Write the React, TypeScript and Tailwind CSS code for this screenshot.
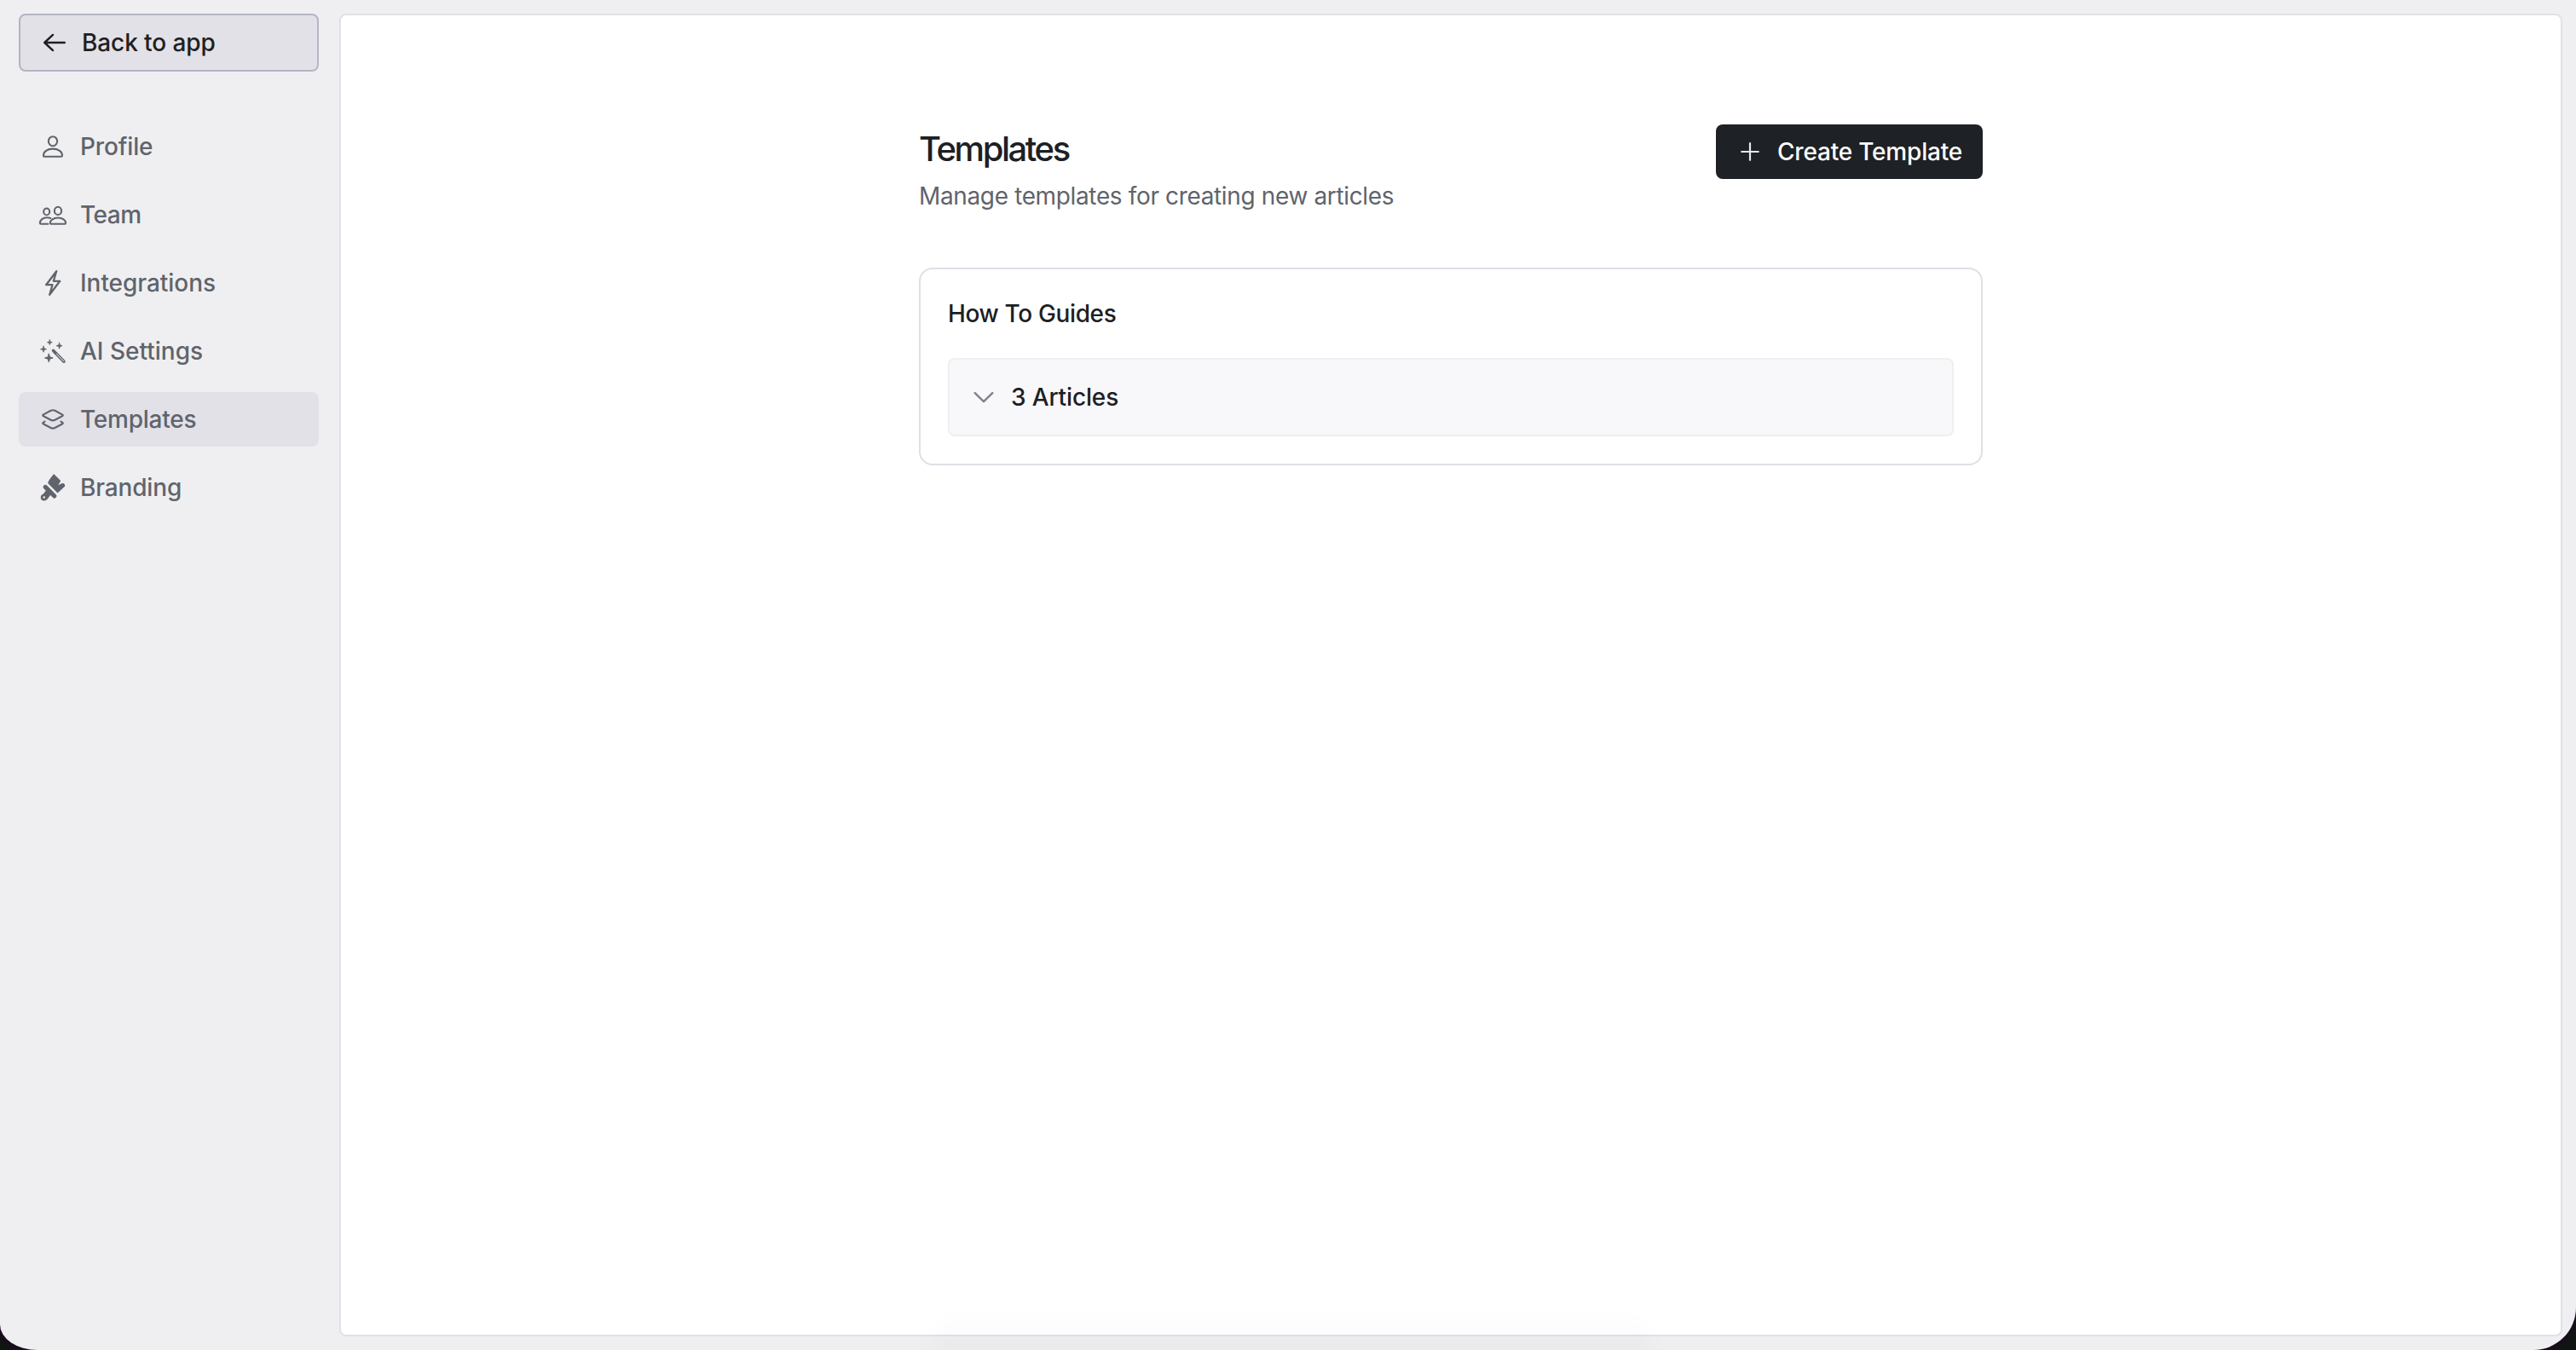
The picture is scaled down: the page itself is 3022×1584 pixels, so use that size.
import type { ReactNode } from "react";

function Icon({ children, className = "" }: { children: ReactNode; className?: string }) {
  return (
    <svg
      viewBox="0 0 32 32"
      className={`size-8 shrink-0 overflow-visible ${className}`}
      fill="none"
      stroke="currentColor"
      strokeWidth={2.1}
      strokeLinecap="round"
      strokeLinejoin="round"
      aria-hidden="true"
    >
      {children}
    </svg>
  );
}

const ArrowLeft = () => (
  <Icon className="text-[#1c2024]">
    <path strokeWidth={2.4} d="M4.2 16H27.8M14 6.9L4.2 16L14 25.1" />
  </Icon>
);

const Person = () => (
  <Icon>
    <ellipse cx="16" cy="9.7" rx="5.1" ry="5.5" />
    <path d="M5 26.4C5 22 9.5 18.6 16 18.6S27 22 27 26.4Q27 27.8 25.6 27.8H6.4Q5 27.8 5 26.4Z" />
  </Icon>
);

const People = () => (
  <Icon>
    <ellipse cx="8.7" cy="12.4" rx="3.5" ry="3.9" />
    <ellipse cx="22" cy="11.4" rx="4.1" ry="4.6" />
    <path d="M10.4 26.8H2Q0.9 26.8 0.9 25.7C0.9 22 4.4 19.2 9 19.2Q11.4 19.2 13.2 20" />
    <path d="M12.9 25.6C12.9 22.2 16.6 19.5 22 19.5S31.1 22.2 31.1 25.6Q31.1 26.8 30 26.8H14Q12.9 26.8 12.9 25.6Z" />
  </Icon>
);

const Bolt = () => (
  <Icon>
    <path strokeWidth={2.3} d="M20.2 2.2L8.1 18.2H15.5L12.2 29.8L24.3 13.8H16.8Z" />
  </Icon>
);

const star = (x: number, y: number, r: number) => {
  const k = r * 0.24;
  return `M${x} ${y - r}L${x + k} ${y - k}L${x + r} ${y}L${x + k} ${y + k}L${x} ${y + r}L${x - k} ${y + k}L${x - r} ${y}L${x - k} ${y - k}Z`;
};

const Wand = () => (
  <Icon>
    <path fill="currentColor" strokeWidth={0.8} d={star(12.3, 5.7, 2.9)} />
    <path fill="currentColor" strokeWidth={0.8} d={star(5, 13.7, 3.5)} />
    <path fill="currentColor" strokeWidth={0.8} d={star(23.6, 9.7, 3.5)} />
    <path fill="currentColor" strokeWidth={1} d={star(11.3, 24, 4.8)} />
    <path strokeWidth={3.6} d="M16.6 15.4L29 28.2" />
    <path stroke="#efeff1" strokeWidth={1} d="M20.4 19.4L28.9 28.1" />
  </Icon>
);

const Layers = () => (
  <Icon>
    <path d="M4.6 10.6L13.6 5.8Q16 4.6 18.4 5.8L27.4 10.6Q28.2 11.3 27.4 12L18.4 16.8Q16 18 13.6 16.8L4.6 12Q3.8 11.3 4.6 10.6Z" />
    <path d="M6.6 18.6L4.6 19.8Q3.8 20.5 4.6 21.2L13.6 26Q16 27.2 18.4 26L27.4 21.2Q28.2 20.5 27.4 19.8L25.4 18.6" />
  </Icon>
);

const Brush = () => (
  <Icon>
    <path
      fill="currentColor"
      strokeWidth={1.6}
      d="M17.2 1.2L24.3 8.3L21.6 12.6Q22.4 14.2 24.2 13.3L27.4 11.8Q29.6 12 29.4 14.2L21.6 21.4L11 10.6Q11.4 9.2 12.4 7.6Z"
    />
    <path strokeWidth={5.2} d="M7.2 15.4L17.8 26" />
    <path fill="currentColor" strokeWidth={1.4} d="M9.6 18.4L14 22.6L9.2 29L4.4 25.2Z" />
    <circle cx="5.7" cy="27.6" r="2.6" fill="#efeff1" strokeWidth={2.7} />
  </Icon>
);

const Plus = () => (
  <Icon className="text-[#e8e8ea]">
    <path strokeWidth={2.2} d="M16 6.2V25.8M6.2 16H25.8" />
  </Icon>
);

const ChevronDown = () => (
  <Icon className="text-[#80838d]">
    <path strokeWidth={2.5} d="M5.7 11.1L16 21.2L26.3 11.1" />
  </Icon>
);

const navItems = [
  { label: "Profile", icon: <Person />, spacing: "tracking-[-0.15px]" },
  { label: "Team", icon: <People />, spacing: "tracking-[-0.5px]" },
  { label: "Integrations", icon: <Bolt />, spacing: "tracking-[-0.04px]" },
  { label: "AI Settings", icon: <Wand />, spacing: "tracking-[0px]" },
  { label: "Templates", icon: <Layers />, spacing: "tracking-[-0.24px]", active: true },
  { label: "Branding", icon: <Brush />, spacing: "tracking-[-0.16px]" },
];

function Sidebar() {
  return (
    <aside className="flex w-[398px] shrink-0 flex-col pt-4 pr-6 pl-[22px]">
      <button className="flex h-[68px] items-center gap-4 rounded-lg border-2 border-[#b3b5c5] bg-[#e2e1e8] px-6 font-medium tracking-[-0.1px] text-[#202020]">
        <ArrowLeft />
        <span>Back to app</span>
      </button>
      <nav className="mt-14 flex flex-col gap-4">
        {navItems.map((item) => (
          <a
            key={item.label}
            className={`flex h-16 items-center gap-4 rounded-lg px-6 font-medium text-[#60646c] ${item.active ? "bg-[#e2e1e8]" : ""}`}
          >
            {item.icon}
            <span className={item.spacing}>{item.label}</span>
          </a>
        ))}
      </nav>
    </aside>
  );
}

export default function App() {
  return (
    <div className="h-[1584px] w-full overflow-hidden bg-[#101412] font-[Inter,sans-serif] text-[28px] leading-10">
      <div className="relative flex h-full overflow-hidden rounded-br-[50px] rounded-bl-[44px_30px] bg-[#efeff1] shadow-[0_0_0_3px_#1b0b20]">
        <Sidebar />
        <main className="mt-4 mr-4 mb-4 flex-1 rounded-lg border-2 border-[#e1e1e6] bg-white pt-32">
          <div className="mx-auto w-[1248px]">
            <header className="flex items-start justify-between">
              <div>
                <h1 className="text-[40px] leading-[58px] font-medium tracking-[-2.45px] text-[#1c2024]">Templates</h1>
                <p className="mt-1.5 tracking-[-0.36px] text-[#60646c]">Manage templates for creating new articles</p>
              </div>
              <button className="flex h-16 w-[313px] items-center gap-4 rounded-lg bg-[#1e2125] pl-6 font-medium tracking-[-0.2px] whitespace-nowrap text-white">
                <Plus />
                <span>Create Template</span>
              </button>
            </header>
            <section className="mt-16 rounded-2xl border-2 border-[#e0dfe6] p-8">
              <h2 className="font-medium tracking-[-0.36px] text-[#1c2024]">How To Guides</h2>
              <div className="mt-8 flex h-[92px] items-center gap-4 rounded-lg border-2 border-[#efeff0] bg-[#f8f8fb] px-6 font-medium tracking-[-0.14px] text-[#1c2024]">
                <ChevronDown />
                <span>3 Articles</span>
              </div>
            </section>
          </div>
        </main>
        <div className="pointer-events-none absolute bottom-[-40px] left-[1090px] h-[72px] w-[850px] rounded-[60px] bg-black/[0.014] blur-[12px]" />
      </div>
    </div>
  );
}
